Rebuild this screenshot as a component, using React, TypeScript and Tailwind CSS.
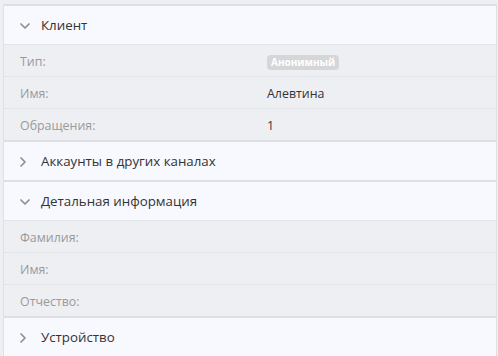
import { ChevronDown, ChevronRight } from "lucide-react";

type Row = { label: string; value?: string; badge?: string };

const sections: { title: string; open: boolean; rows: Row[] }[] = [
  {
    title: "Клиент",
    open: true,
    rows: [
      { label: "Тип:", badge: "Анонимный" },
      { label: "Имя:", value: "Алевтина" },
      { label: "Обращения:", value: "1" },
    ],
  },
  { title: "Аккаунты в других каналах", open: false, rows: [] },
  {
    title: "Детальная информация",
    open: true,
    rows: [{ label: "Фамилия:" }, { label: "Имя:" }, { label: "Отчество:" }],
  },
  { title: "Устройство", open: false, rows: [] },
];

export default function App() {
  return (
    <div
      className="w-[498px] h-[356px] overflow-hidden bg-[#eeeff3]"
      style={{ fontFamily: '"Segoe UI", "Open Sans", sans-serif' }}
    >
      <div className="h-[4px]" />
      <div className="ml-[3px] mr-[1px] border-l border-r border-[#dfe0e4]">
        {sections.map((s) => (
          <div key={s.title} className="border-t-2 border-[#dfe0e4]">
            <div className="h-[38px] bg-[#f8f9fe] flex items-center pl-[13px] pt-[2px] text-[13.3px] text-[#333]">
              {s.open ? (
                <ChevronDown size={16} strokeWidth={2.6} className="text-[#8f8f8f]" />
              ) : (
                <ChevronRight size={16} strokeWidth={2.6} className="text-[#8f8f8f] -ml-[2px] mr-[2px]" />
              )}
              <span className="ml-[8px]">{s.title}</span>
            </div>
            {s.rows.map((r) => (
              <div
                key={r.label}
                className="h-[32px] border-t border-[#e3e4e8] flex items-center pt-[3px] text-[12.4px]"
              >
                <div className="w-[263px] pl-[16px] text-[#9a9a9a]">{r.label}</div>
                {r.badge ? (
                  <span className="bg-[#d6d6d8] text-white font-bold text-[10px] leading-[15px] px-[4px] rounded-[4px]">
                    {r.badge}
                  </span>
                ) : (
                  <div className="text-[#333]">{r.value}</div>
                )}
              </div>
            ))}
          </div>
        ))}
      </div>
    </div>
  );
}
